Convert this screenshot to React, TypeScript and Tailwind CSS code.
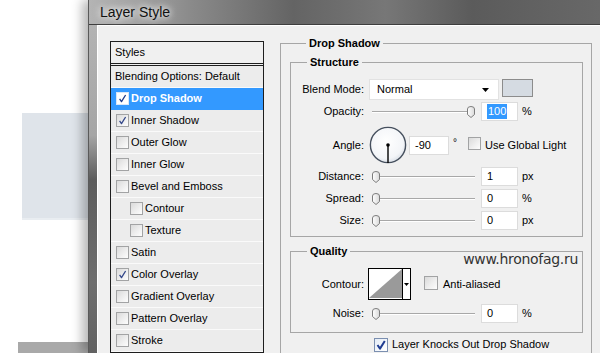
import React from "react";

const F = "font-['Liberation_Sans',Arial,sans-serif]";

function Check({ checked, white, big }: { checked?: boolean; white?: boolean; big?: boolean }) {
  return (
    <span
      className={
        (big ? "w-[14px] h-[14px] " : "w-[13px] h-[13px] ") +
        "inline-flex shrink-0 items-center justify-center border " +
        (white
          ? "border-[#d8e6f7] bg-white"
          : "border-[#a2a3a4] bg-[linear-gradient(135deg,#dadada_0%,#f0f0f0_60%,#fdfdfd_100%)]")
      }
    >
      {checked && (
        <svg width="9" height="9" viewBox="0 0 9 9">
          <path d="M1.6 4.8 L3.5 7.6 L7.6 1" stroke={white ? "#1d3a8a" : "#33478a"} strokeWidth="1.3" fill="none" strokeLinejoin="round" />
        </svg>
      )}
    </span>
  );
}

function Thumb({ className }: { className: string }) {
  return (
    <svg className={className} width="8" height="12" viewBox="0 0 8 12">
      <defs>
        <linearGradient id="tg" x1="0" y1="0" x2="1" y2="0">
          <stop offset="0" stopColor="#ffffff" />
          <stop offset="1" stopColor="#d9d9d9" />
        </linearGradient>
      </defs>
      <path d="M0.5 3 Q0.5 0.5 4 0.5 Q7.5 0.5 7.5 3 L7.5 8.5 L4 11.5 L0.5 8.5 Z" fill="url(#tg)" stroke="#7d7d7d" strokeWidth="1" />
    </svg>
  );
}

function Slider({ right }: { right?: boolean }) {
  return (
    <div className="relative ml-[3px] w-[103px] h-[12px] flex items-center">
      <div className="w-full h-[2px] border-t border-t-[#a8a8a8] border-b border-b-white" />
      <Thumb className={right ? "absolute right-0 top-0" : "absolute left-0 top-0"} />
    </div>
  );
}

function Field({ children, w }: { children: React.ReactNode; w?: string }) {
  return (
    <div className={(w ?? "w-[37px]") + " h-[19px] bg-white border border-[#dcdcdc] pl-[5px] flex items-center"}>
      {children}
    </div>
  );
}

function Row({ label, className, children }: { label: string; className: string; children: React.ReactNode }) {
  return (
    <div className={"flex items-center " + className}>
      <div className="w-[73px] text-right">{label}</div>
      <div className="ml-[5px] flex items-center">{children}</div>
    </div>
  );
}

const styleItems: { t: string; c?: boolean; sel?: boolean; sub?: boolean }[] = [
  { t: "Drop Shadow", c: true, sel: true },
  { t: "Inner Shadow", c: true },
  { t: "Outer Glow" },
  { t: "Inner Glow" },
  { t: "Bevel and Emboss" },
  { t: "Contour", sub: true },
  { t: "Texture", sub: true },
  { t: "Satin" },
  { t: "Color Overlay", c: true },
  { t: "Gradient Overlay" },
  { t: "Pattern Overlay" },
  { t: "Stroke" },
];

export default function App() {
  return (
    <div className={"w-[600px] h-[353px] overflow-hidden bg-white flex text-[11px] leading-[13px] text-black " + F}>
      {/* background page */}
      <div className="w-[88px] shrink-0 flex flex-col">
        <div className="h-[113px]" />
        <div className="h-[107px] ml-[22px] bg-[#dfe4ea] border-b-2 border-b-[#e9edf1]" />
        <div className="flex-1" />
        <div className="h-[11px] ml-[18px] bg-[#a9a9a9]" />
      </div>

      {/* dialog */}
      <div className="w-[512px] shrink-0 flex flex-col shadow-[-6px_0_10px_rgba(0,0,0,0.28)] border-l border-l-[#5a5a5a]">
        <div className="h-[25px] shrink-0 flex items-center pl-[11px] border-b border-b-[#3e3e3e] bg-[linear-gradient(90deg,#b4b4b4_0%,#a2a2a2_10%,#8a8a8a_20%,#646464_40%,#777777_58%,#5b5b5b_75%,#686868_100%)]">
          <span className="text-[14px] leading-[16px] text-[#111] [text-shadow:0_0_6px_#ffffff,0_0_10px_#ffffff]">Layer Style</span>
        </div>
        <div className="flex flex-1">
          <div className="w-[8px] shrink-0 bg-[linear-gradient(180deg,#b3b3b3_0%,#a5a5a5_30%,#5c5c5c_42%,#6e6e6e_70%,#5a5a5a_100%)]" />
          <div className="flex-1 flex items-start bg-[#f0f0f0] border-l border-t border-white">
            {/* styles list */}
            <div className="ml-[12px] mt-[15px] w-[154px] shrink-0 border border-[#1e1e1e] bg-[#ececec]">
              <div className="h-[24px] flex items-center pl-[4px] border-b-[3px] border-double border-b-[#1e1e1e] bg-[#f0f0f0]">Styles</div>
              <div className="h-[22px] flex items-center pl-[4px] border-b border-b-[#fafafa]">Blending Options: Default</div>
              {styleItems.map((it) => (
                <div
                  key={it.t}
                  className={
                    "h-[22px] flex items-center gap-[1px] border-b " +
                    (it.sub ? "pl-[19px] " : "pl-[5px] ") +
                    (it.sel ? "bg-[#3399ff] border-b-[#3399ff] text-white font-bold" : "border-b-[#fafafa]")
                  }
                >
                  <Check checked={it.c} white={it.sel} />
                  <span className="ml-[1px]">{it.t}</span>
                </div>
              ))}
            </div>

            {/* drop shadow group */}
            <fieldset className="ml-[16px] mt-[11px] w-[312px] shrink-0 border border-[#a6a6a6] pl-[9px] pb-[40px]">
              <legend className="ml-[16px] px-[3px] font-bold leading-[13px]">Drop Shadow</legend>

              <fieldset className="mt-[6px] w-[293px] border border-[#a6a6a6] pb-[5px]">
                <legend className="ml-[16px] px-[3px] font-bold leading-[13px]">Structure</legend>

                <Row label="Blend Mode:" className="mt-[10px] h-[21px]">
                  <div className="w-[130px] h-[21px] bg-white border border-[#e2e2e2] flex items-center justify-between pl-[7px] pr-[9px]">
                    <span>Normal</span>
                    <svg width="7" height="4" viewBox="0 0 7 4">
                      <path d="M0 0 L7 0 L3.5 4 Z" fill="#000" />
                    </svg>
                  </div>
                  <div className="ml-[3px] self-start w-[31px] h-[18px] bg-[#d5dbe2] border border-[#8c8c8c]" />
                </Row>

                <Row label="Opacity:" className="mt-[1px] h-[21px]">
                  <Slider right />
                  <div className="ml-[6px]">
                    <Field>
                      <span className="bg-[#3399ff] text-white px-[1px] leading-[15px]">100</span>
                    </Field>
                  </div>
                  <span className="ml-[4px]">%</span>
                </Row>

                <Row label="Angle:" className="mt-[4px] h-[38px]">
                  <svg width="38" height="38" viewBox="0 0 38 38">
                    <defs>
                      <radialGradient id="ag" cx="0.45" cy="0.4" r="0.6">
                        <stop offset="0" stopColor="#ffffff" />
                        <stop offset="0.8" stopColor="#f3f5f8" />
                        <stop offset="1" stopColor="#dde2e9" />
                      </radialGradient>
                    </defs>
                    <circle cx="19" cy="19" r="17.6" fill="url(#ag)" stroke="#46505e" strokeWidth="1.4" />
                    <line x1="19" y1="19" x2="19" y2="37" stroke="#000" strokeWidth="1.4" />
                    <circle cx="19" cy="19" r="1.8" fill="#000" />
                  </svg>
                  <div className="ml-[2px]">
                    <Field w="w-[40px]">-90</Field>
                  </div>
                  <span className="ml-[4px] -mt-[5px] text-[10px]">°</span>
                  <span className="ml-[11px]">
                    <Check />
                  </span>
                  <span className="ml-[4px]">Use Global Light</span>
                </Row>

                <Row label="Distance:" className="mt-[2px] h-[21px]">
                  <Slider />
                  <div className="ml-[6px]">
                    <Field>1</Field>
                  </div>
                  <span className="ml-[4px]">px</span>
                </Row>
                <Row label="Spread:" className="mt-[1px] h-[21px]">
                  <Slider />
                  <div className="ml-[6px]">
                    <Field>0</Field>
                  </div>
                  <span className="ml-[4px]">%</span>
                </Row>
                <Row label="Size:" className="mt-[1px] h-[21px]">
                  <Slider />
                  <div className="ml-[6px]">
                    <Field>0</Field>
                  </div>
                  <span className="ml-[4px]">px</span>
                </Row>
              </fieldset>

              <fieldset className="relative mt-[8px] w-[293px] border border-[#a6a6a6] pb-[8px]">
                <legend className="ml-[16px] px-[3px] font-bold leading-[13px]">Quality</legend>
                <span className="absolute right-[4px] -top-[6px] text-[14px] leading-[14px] text-[#333] font-['DejaVu_Sans',Verdana,sans-serif] tracking-[-0.3px]">
                  www.hronofag.ru
                </span>

                <Row label="Contour:" className="mt-[10px] h-[32px]">
                  <div className="-ml-[1px] w-[43px] h-[32px] border-[1.5px] border-black flex bg-white">
                    <svg width="33" height="29" viewBox="0 0 33 29" className="block">
                      <rect x="0" y="0" width="33" height="29" fill="#ffffff" />
                      <path d="M0 29 L33 0 L33 29 Z" fill="#9a9a9a" />
                    </svg>
                    <div className="w-[1px] bg-black" />
                    <div className="flex-1 flex items-center justify-center">
                      <svg width="5" height="3" viewBox="0 0 5 3">
                        <path d="M0 0 L5 0 L2.5 3 Z" fill="#000" />
                      </svg>
                    </div>
                  </div>
                  <span className="ml-[13px]">
                    <Check big />
                  </span>
                  <span className="ml-[5px]">Anti-aliased</span>
                </Row>

                <Row label="Noise:" className="mt-[3px] h-[21px]">
                  <Slider />
                  <div className="ml-[6px]">
                    <Field>0</Field>
                  </div>
                  <span className="ml-[4px]">%</span>
                </Row>
              </fieldset>

              <div className="mt-[4px] h-[15px] pl-[84px] flex items-center">
                <span className="inline-flex w-[14px] h-[14px] items-center justify-center border border-[#7b8fb0] bg-[linear-gradient(135deg,#e4ecf7,#ffffff)]">
                  <svg width="10" height="10" viewBox="0 0 10 10">
                    <path d="M1.5 5 L4 8.6 L8.8 1" stroke="#1f3c92" strokeWidth="2" fill="none" strokeLinejoin="round" />
                  </svg>
                </span>
                <span className="ml-[4px]">Layer Knocks Out Drop Shadow</span>
              </div>
            </fieldset>
          </div>
        </div>
      </div>
    </div>
  );
}
